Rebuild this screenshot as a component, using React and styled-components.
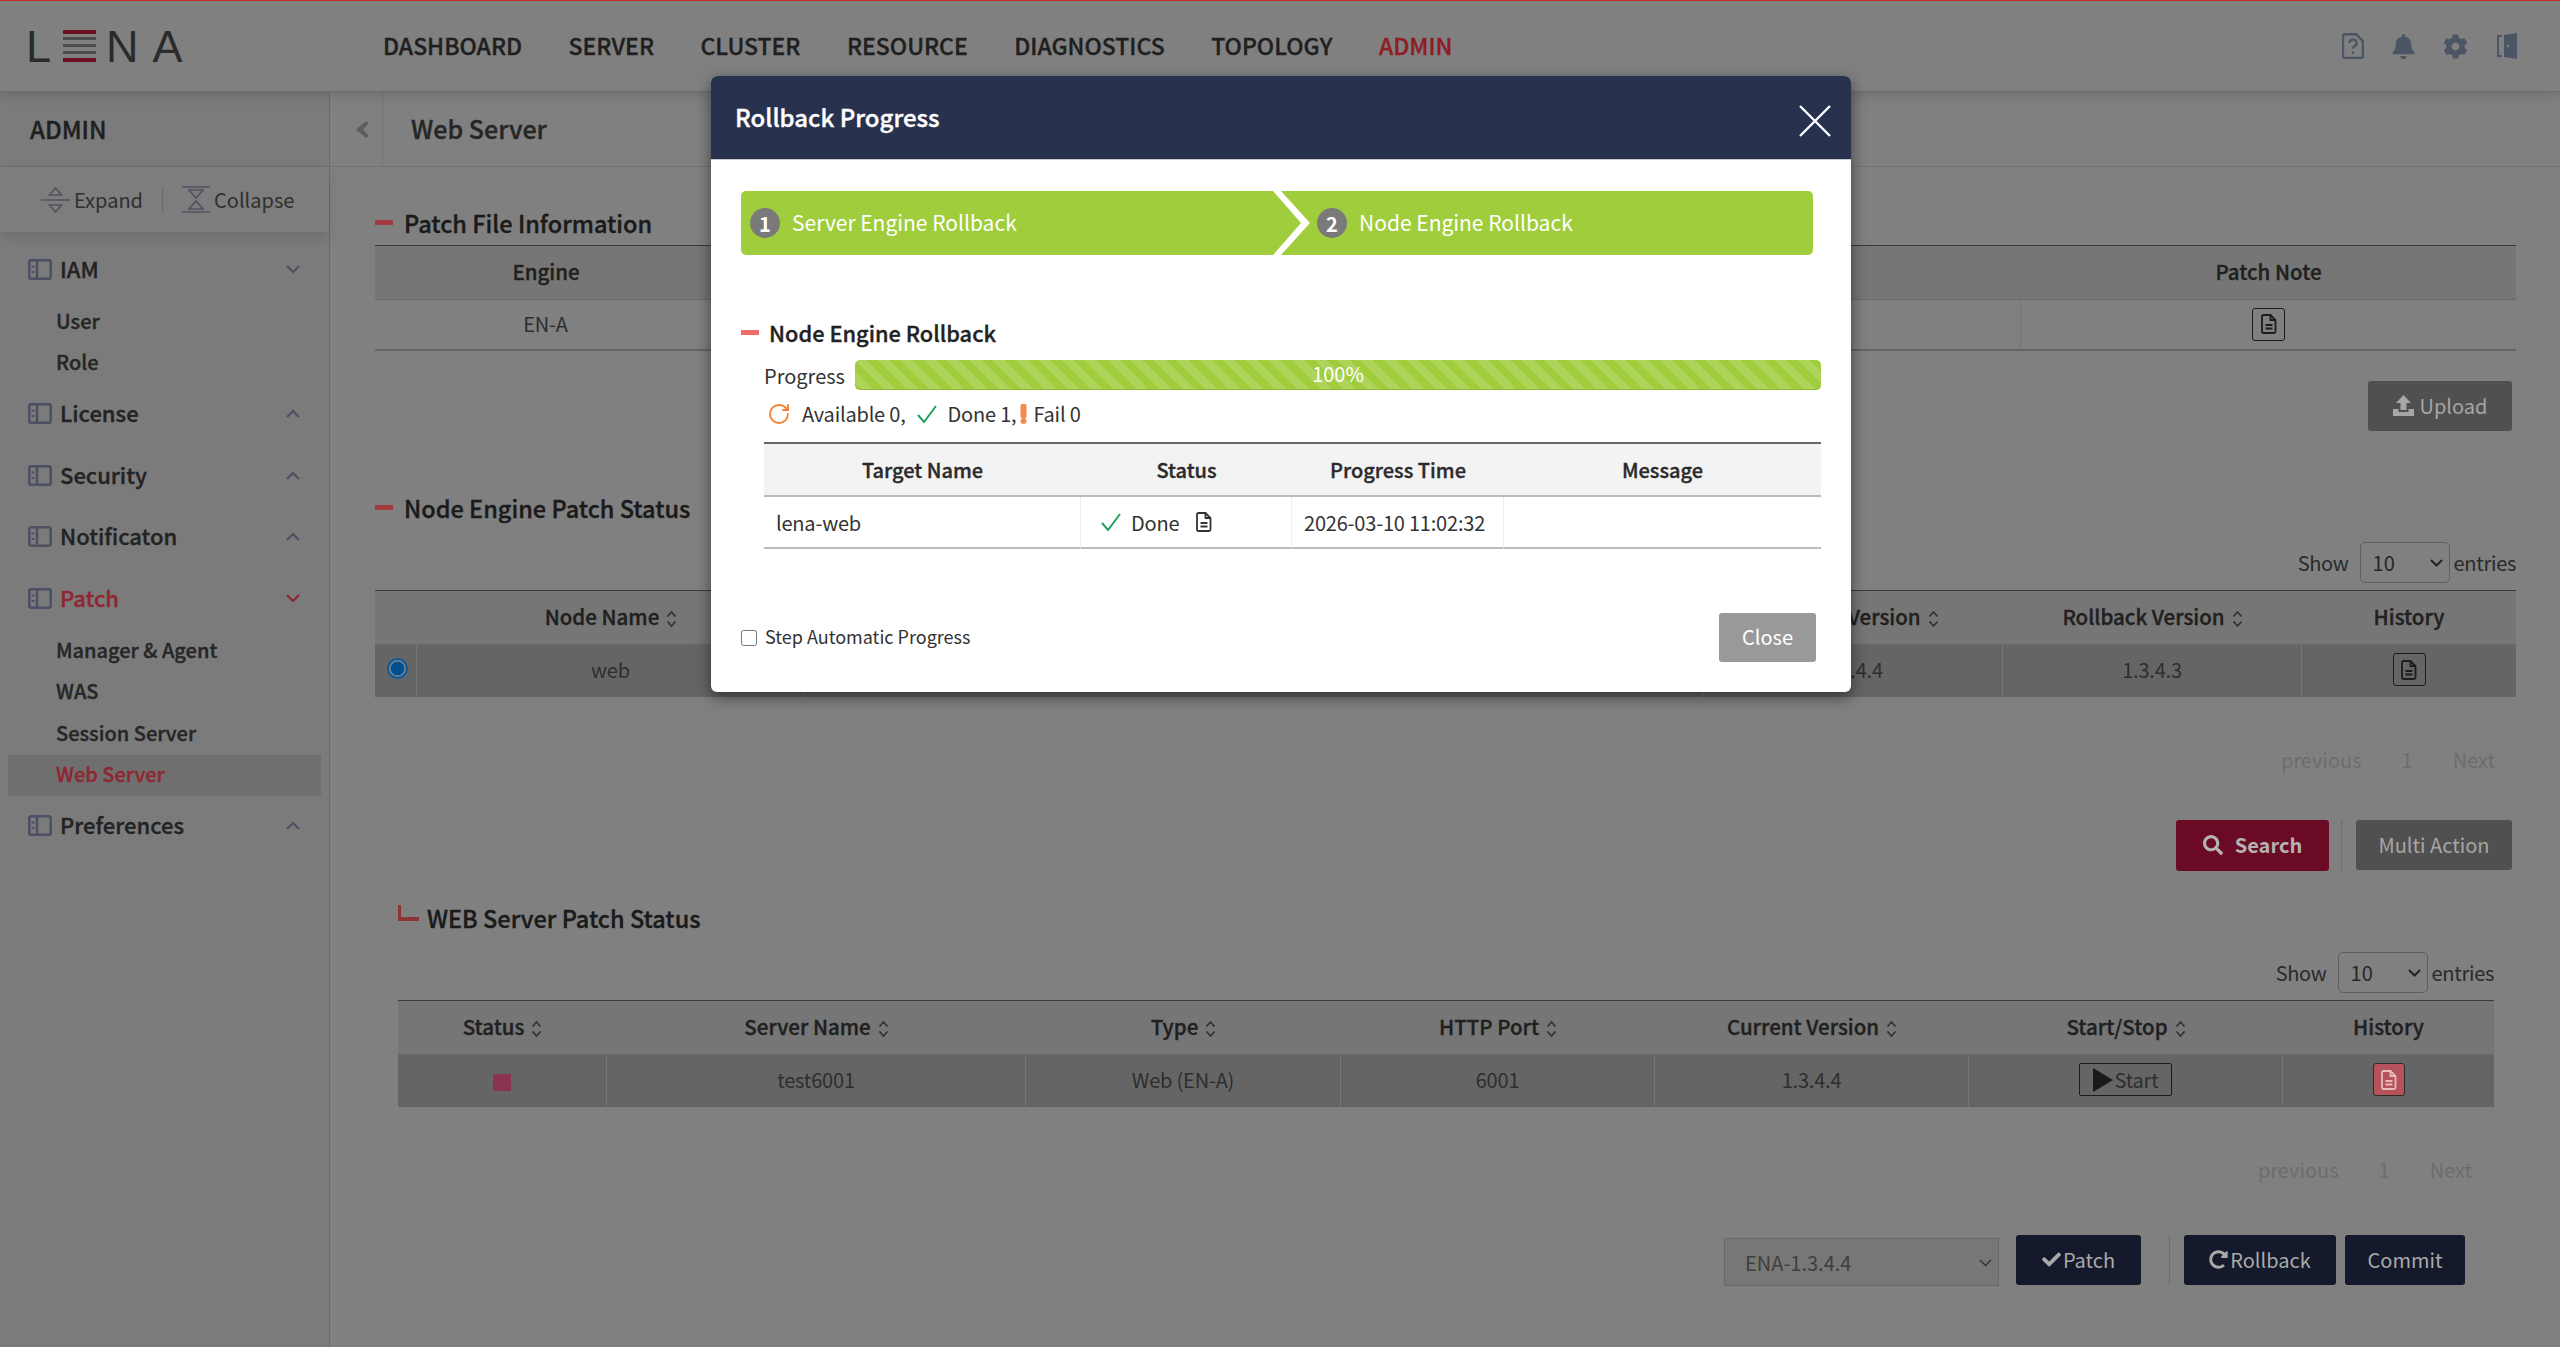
import React from 'react';
import styled, { createGlobalStyle, css } from 'styled-components';
import { FaBell, FaCog, FaSearch, FaCheck, FaRedoAlt } from 'react-icons/fa';
import { RotateCw } from 'lucide-react';

const GlobalStyle = createGlobalStyle`
  * { box-sizing: border-box; }
  html, body { margin: 0; height: 100%; overflow: hidden; }
  body {
    background: #808080;
    font-family: "Noto Sans CJK KR", "Noto Sans", sans-serif;
    color: #262626;
  }
`;

const medium = css`
  font-weight: 500;
  -webkit-text-stroke: 0.35px currentColor;
`;

const menu = [
  { title: 'IAM', open: true, items: ['User', 'Role'] },
  { title: 'License' },
  { title: 'Security' },
  { title: 'Notificaton' },
  { title: 'Patch', open: true, active: true, items: ['Manager & Agent', 'WAS', 'Session Server', 'Web Server'] },
  { title: 'Preferences' },
];

const navItems = ['DASHBOARD', 'SERVER', 'CLUSTER', 'RESOURCE', 'DIAGNOSTICS', 'TOPOLOGY', 'ADMIN'];

const SortIcon = () => (
  <SortSvg viewBox="0 0 11 18" fill="none" stroke="currentColor" strokeWidth="1.8">
    <path d="M1.5 6.5 5.5 2l4 4.5M1.5 11.5l4 4.5 4-4.5" />
  </SortSvg>
);

const FileIcon = ({ size = 20, color = '#1c1c1c' }) => (
  <svg width={size * 0.8} height={size} viewBox="0 0 16 20" fill="none" stroke={color} strokeWidth="1.8">
    <path d="M2.5 1h7l5 5v11.5a1.5 1.5 0 0 1-1.5 1.5H2.5A1.5 1.5 0 0 1 1 17.500v-15A1.500 1.500 0 0 1 2.500 1Z" />
    <path d="M9.500 1v5h5M4.500 11h7M4.500 14.500h7" />
  </svg>
);

const PanelIcon = () => (
  <svg width="24" height="21" viewBox="0 0 24 21" fill="none" stroke="#4c5062" strokeWidth="2.6">
    <rect x="1.300" y="1.300" width="21.400" height="18.400" rx="2" />
    <path d="M9 1v19M5 6.500v2M5 12v2" />
  </svg>
);

const Chevron = ({ up, color = '#4c5062' }) => (
  <svg width="14" height="9" viewBox="0 0 14 9" fill="none" stroke={color} strokeWidth="2.200">
    <path d={up ? 'M1 8l6-6 6 6' : 'M1 1l6 6 6-6'} />
  </svg>
);

const GreenCheck = () => (
  <svg width="20" height="18" viewBox="0 0 20 18" fill="none" stroke="#1fa35a" strokeWidth="2">
    <path d="M1 10l6 7L19 1" />
  </svg>
);

const StatusTable = ({ children, head, widths }) => (
  <DataTable>
    <colgroup>
      {widths.map((w, i) => (
        <col key={i} style={{ width: w }} />
      ))}
    </colgroup>
    <thead>
      <tr>
        {head.map((h, i) => (
          <th key={i}>
            {h.label}
            {h.sort && <SortIcon />}
          </th>
        ))}
      </tr>
    </thead>
    <tbody>{children}</tbody>
  </DataTable>
);

const Entries = () => (
  <ShowRow>
    Show
    <SelectBox>
      <EntrySelect defaultValue="10">
        <option>10</option>
      </EntrySelect>
      <SelectArrow width="13" height="8" viewBox="0 0 13 8">
        <path d="M1 1l5.500 5.500L12 1" />
      </SelectArrow>
    </SelectBox>
    entries
  </ShowRow>
);

const Pagination = ({ right }) => (
  <Pager $right={right}>
    <span>previous</span>
    <span>1</span>
    <span>Next</span>
  </Pager>
);

export default function App() {
  return (
    <Page>
      <GlobalStyle />
      <Topbar>
        <Logo>
          <span>L</span>
          <svg width="33" height="32" viewBox="0 0 33 32">
            <rect y="0" width="33" height="4" fill="#6b0f22" />
            <rect y="7" width="33" height="3" fill="#4d4d4d" />
            <rect y="14" width="33" height="3" fill="#4d4d4d" />
            <rect y="21" width="33" height="3" fill="#4d4d4d" />
            <rect y="28" width="33" height="4" fill="#6b0f22" />
          </svg>
          <LogoN>N</LogoN>
          <LogoA>A</LogoA>
        </Logo>
        <Nav>
          {navItems.map((n) => (
            <NavItem key={n} $active={n === 'ADMIN'}>
              {n}
            </NavItem>
          ))}
        </Nav>
        <TopIcons>
          <svg width="22" height="26" viewBox="0 0 22 26" fill="none" stroke="#4b5563" strokeWidth="2.400">
            <path d="M3 1.200h11l7 7V23a2 2 0 0 1-2 2H3a2 2 0 0 1-2-2V3.200a2 2 0 0 1 2-2Z" />
            <path d="M7.500 10a3.500 3.500 0 1 1 5 3.200c-1.200.6-1.500 1.300-1.500 2.600M11 18.500v2.500" />
          </svg>
          <FaBell size={25} color="#4b5563" />
          <FaCog size={25} color="#4b5563" />
          <DoorIcon width="20" height="26" viewBox="0 0 20 26">
            <path d="M7 2l13-2v26L7 24Z" fill="#4b5563" />
            <path d="M5 3H1v20h4" fill="none" stroke="#4b5563" strokeWidth="2" />
            <circle cx="11" cy="13" r="1.300" fill="#808080" />
          </DoorIcon>
        </TopIcons>
      </Topbar>

      <Body>
        <Sidebar>
          <SideTitle>ADMIN</SideTitle>
          <SideTools>
            <ToolButton>
              <svg width="29" height="26" viewBox="0 0 29 26" fill="none" stroke="#4f5260" strokeWidth="1.600">
                <path d="M0 13h29M14.500 1l6 7h-12ZM14.500 25l6-7h-12Z" />
              </svg>
              Expand
            </ToolButton>
            <ToolDivider />
            <ToolButton>
              <svg width="28" height="27" viewBox="0 0 28 27" fill="none" stroke="#4f5260" strokeWidth="1.600">
                <path d="M0 1h28M0 26h28M7 4h14l-7 8ZM7 23h14l-7-8Z" />
              </svg>
              Collapse
            </ToolButton>
          </SideTools>
          <Menu>
            {menu.map((group) => (
              <Group key={group.title}>
                <GroupHead $active={group.active}>
                  <PanelIcon />
                  <span>{group.title}</span>
                  <GroupChevron>
                    <Chevron up={!group.open} color={group.active ? '#8f2630' : '#4c5062'} />
                  </GroupChevron>
                </GroupHead>
                {group.items && (
                  <SubMenu>
                    {group.items.map((item) => (
                      <SubItem key={item} $active={item === 'Web Server'}>
                        {item}
                      </SubItem>
                    ))}
                  </SubMenu>
                )}
              </Group>
            ))}
          </Menu>
        </Sidebar>

        <Main>
          <Crumb>
            <CrumbToggle>
              <svg width="13" height="17" viewBox="0 0 13 17">
                <path d="M10 0 0 8.500 10 17l3-2-6-6.500L13 2Z" fill="#5e5e5e" />
              </svg>
            </CrumbToggle>
            <CrumbTitle>Web Server</CrumbTitle>
          </Crumb>

          <Content>
            <SectionTitle>Patch File Information</SectionTitle>
            <StatusTable
              widths={['342px', 'auto', '495px']}
              head={[{ label: 'Engine' }, { label: '' }, { label: 'Patch Note' }]}
            >
              <tr>
                <td>EN-A</td>
                <td />
                <td>
                  <IconButton>
                    <FileIcon />
                  </IconButton>
                </td>
              </tr>
            </StatusTable>
            <ActionRow $top={30}>
              <GrayButton $width={144}>
                <svg width="21" height="21" viewBox="0 0 21 21" fill="#a6a6a6">
                  <path d="M10.500 0 18 8h-4.500v7h-6V8H3ZM0 14h5.500v3h10v-3H21v7H0Z" />
                </svg>
                Upload
              </GrayButton>
            </ActionRow>

            <SectionTitle $top={59}>Node Engine Patch Status</SectionTitle>
            <Entries />
            <StatusTable
              widths={['42px', '388px', 'auto', '299px', '299px', '214px']}
              head={[
                { label: '' },
                { label: 'Node Name', sort: true },
                { label: '' },
                { label: 'Current Version', sort: true },
                { label: 'Rollback Version', sort: true },
                { label: 'History' },
              ]}
            >
              <SelectedRow>
                <td>
                  <Radio />
                </td>
                <td>web</td>
                <td />
                <td>1.3.4.4</td>
                <td>1.3.4.3</td>
                <td>
                  <IconButton>
                    <FileIcon />
                  </IconButton>
                </td>
              </SelectedRow>
            </StatusTable>
            <Pagination right={21} />
            <ActionRow $top={43}>
              <SearchButton>
                <FaSearch size={20} />
                Search
              </SearchButton>
              <ActionDivider />
              <GrayButton $width={156}>Multi Action</GrayButton>
            </ActionRow>

            <SubSection>
              <SubTitle>WEB Server Patch Status</SubTitle>
              <Entries />
              <StatusTable
                widths={['209px', '419px', '315px', '314px', '314px', '314px', '211px']}
                head={[
                  { label: 'Status', sort: true },
                  { label: 'Server Name', sort: true },
                  { label: 'Type', sort: true },
                  { label: 'HTTP Port', sort: true },
                  { label: 'Current Version', sort: true },
                  { label: 'Start/Stop', sort: true },
                  { label: 'History' },
                ]}
              >
                <SelectedRow>
                  <td>
                    <StopMark />
                  </td>
                  <td>test6001</td>
                  <td>Web (EN-A)</td>
                  <td>6001</td>
                  <td>1.3.4.4</td>
                  <td>
                    <StartButton>
                      <svg width="20" height="24" viewBox="0 0 20 24">
                        <path d="M0 0l20 12L0 24Z" fill="#1a1a1a" />
                      </svg>
                      Start
                    </StartButton>
                  </td>
                  <td>
                    <HistoryAlert>
                      <FileIcon color="#e6bcbc" />
                    </HistoryAlert>
                  </td>
                </SelectedRow>
              </StatusTable>
              <Pagination right={22} />
              <BottomActions>
                <VersionBox>
                  <VersionSelect defaultValue="ENA-1.3.4.4">
                    <option>ENA-1.3.4.4</option>
                  </VersionSelect>
                  <VersionArrow width="13" height="8" viewBox="0 0 13 8">
                    <path d="M1 1l5.500 5.500L12 1" />
                  </VersionArrow>
                </VersionBox>
                <NavyButton $width={125}>
                  <FaCheck size={19} />
                  Patch
                </NavyButton>
                <BottomDivider />
                <NavyButton $width={152}>
                  <FaRedoAlt size={19} />
                  Rollback
                </NavyButton>
                <NavyButton $width={120}>Commit</NavyButton>
              </BottomActions>
            </SubSection>
          </Content>
        </Main>
      </Body>

      <Modal>
        <ModalHeader>
          <ModalTitle>Rollback Progress</ModalTitle>
          <CloseIcon width="32" height="32" viewBox="0 0 32 32" stroke="#fff" strokeWidth="2.400">
            <path d="M1 1l30 30M31 1 1 31" />
          </CloseIcon>
        </ModalHeader>
        <ModalBody>
          <Steps>
            <Step>
              <StepNumber>1</StepNumber>
              <StepLabel>Server Engine Rollback</StepLabel>
            </Step>
            <StepArrow width="37" height="64" viewBox="0 0 37 64">
              <path d="M0 0h8l29 32L8 64H0l28-32Z" fill="#fff" />
            </StepArrow>
            <Step>
              <StepNumber>2</StepNumber>
              <StepLabel>Node Engine Rollback</StepLabel>
            </Step>
          </Steps>

          <ModalSection>Node Engine Rollback</ModalSection>
          <Indented>
            <ProgressRow>
              <span>Progress</span>
              <ProgressBar>100%</ProgressBar>
            </ProgressRow>
            <Counts>
              <RotateCw size={24} color="#f47f2e" strokeWidth={1.800} />
              <span>Available 0,</span>
              <GreenCheck />
              <span>Done 1,</span>
              <BangIcon width="7" height="20" viewBox="0 0 7 20" fill="#f58a4b">
                <rect x="0.500" width="6" height="14" rx="1.500" />
                <circle cx="3.500" cy="17" r="3" />
              </BangIcon>
              <span>Fail 0</span>
            </Counts>
            <ProgressTable>
              <colgroup>
                <col style={{ width: 317 }} />
                <col style={{ width: 211 }} />
                <col style={{ width: 212 }} />
                <col />
              </colgroup>
              <thead>
                <tr>
                  <th>Target Name</th>
                  <th>Status</th>
                  <th>Progress Time</th>
                  <th>Message</th>
                </tr>
              </thead>
              <tbody>
                <tr>
                  <td>lena-web</td>
                  <td>
                    <DoneCell>
                      <GreenCheck />
                      Done
                      <FileIcon size={20} color="#333" />
                    </DoneCell>
                  </td>
                  <td>2026-03-10 11:02:32</td>
                  <td />
                </tr>
              </tbody>
            </ProgressTable>
          </Indented>
          <ModalFooter>
            <AutoLabel>
              <input type="checkbox" />
              Step Automatic Progress
            </AutoLabel>
            <CloseButton>Close</CloseButton>
          </ModalFooter>
        </ModalBody>
      </Modal>
    </Page>
  );
}

const Page = styled.div`
  position: relative;
  width: 2560px;
  height: 1347px;
  overflow: hidden;
  border-top: 1px solid #c62828;
`;

const Topbar = styled.header`
  position: relative;
  z-index: 2;
  display: flex;
  align-items: center;
  height: 91px;
  padding: 0 43px 0 30px;
  background: #808080;
  border-bottom: 1px solid #6e6e6e;
  box-shadow: 0 3px 12px rgba(0, 0, 0, 0.14);
`;

const Logo = styled.div`
  display: flex;
  align-items: center;
  gap: 12px;
  width: 353px;
  margin-left: -4px;
  margin-right: 4px;
  font-family: "Liberation Sans", sans-serif;
  font-size: 45px;
  line-height: 1;
  color: #2b2b2b;
`;

const LogoN = styled.span`
  margin-left: -2px;
`;

const LogoA = styled.span`
  margin-left: 2px;
`;

const Nav = styled.nav`
  display: flex;
  gap: 46.500px;
  padding-bottom: 3px;
`;

const NavItem = styled.a`
  font-size: 23px;
  ${medium}
  color: ${(p) => (p.$active ? '#8f1d24' : '#1f1f1f')};
`;

const TopIcons = styled.div`
  display: flex;
  align-items: center;
  gap: 27px;
  margin-left: auto;
`;

const DoorIcon = styled.svg`
  margin-left: 2px;
`;

const Body = styled.div`
  display: flex;
  height: 1255px;
`;

const Sidebar = styled.aside`
  flex: 0 0 330px;
  background: #7b7b7b;
  border-right: 1px solid #6c6c6c;
`;

const SideTitle = styled.h2`
  display: flex;
  align-items: center;
  height: 75px;
  margin: 0;
  padding: 0 0 2px 30px;
  font-size: 24px;
  ${medium}
  color: #1f1f1f;
  border-bottom: 1px solid #6c6c6c;
`;

const SideTools = styled.div`
  position: relative;
  display: flex;
  align-items: center;
  gap: 19px;
  height: 65px;
  padding-left: 41px;
  background: #7d7d7d;
  box-shadow: 0 6px 12px rgba(0, 0, 0, 0.1);
`;

const ToolButton = styled.div`
  display: flex;
  align-items: center;
  gap: 4px;
  font-size: 20px;
  color: #2f2f2f;
`;

const ToolDivider = styled.i`
  width: 1px;
  height: 26px;
  background: #6a6a6a;
`;

const Menu = styled.nav`
  padding: 17px 0 0;
`;

const Group = styled.div`
  margin-bottom: 21.500px;
`;

const GroupHead = styled.div`
  display: flex;
  align-items: center;
  gap: 8px;
  height: 40px;
  padding: 0 29px 0 28px;
  font-size: 22px;
  ${medium}
  color: ${(p) => (p.$active ? '#8f2630' : '#232323')};

  span:nth-child(2) {
    margin-bottom: 3px;
  }
`;

const GroupChevron = styled.span`
  display: flex;
  margin-left: auto;
`;

const SubMenu = styled.div`
  margin: 12px 0 -12px;
`;

const SubItem = styled.div`
  display: flex;
  align-items: center;
  height: 41.500px;
  margin: 0 8px;
  padding: 0 0 3px 48px;
  font-size: 20px;
  ${medium}
  color: ${(p) => (p.$active ? '#8f2630' : '#262626')};
  background: ${(p) => (p.$active ? '#6f6f6f' : 'transparent')};
`;

const Main = styled.main`
  flex: 1;
  min-width: 0;
`;

const Crumb = styled.div`
  display: flex;
  height: 75px;
  border-bottom: 1px solid #727272;
`;

const CrumbToggle = styled.div`
  display: flex;
  align-items: center;
  justify-content: center;
  width: 53px;
  padding-left: 12px;
  border-right: 1px solid #747474;
`;

const CrumbTitle = styled.h1`
  display: flex;
  align-items: center;
  margin: 0;
  padding: 0 0 3px 28px;
  font-size: 25px;
  ${medium}
  color: #262626;
`;

const Content = styled.div`
  padding: 38px 44px 0 45px;
`;

const SectionTitle = styled.h3`
  display: flex;
  align-items: center;
  gap: 11px;
  height: 40px;
  margin: ${(p) => p.$top || 0}px 0 0;
  padding-bottom: 5px;
  font-size: 23.500px;
  ${medium}
  color: #1a1a1a;

  &::before {
    content: '';
    width: 18px;
    height: 5px;
    background: #a03a3f;
  }
`;

const SubSection = styled.section`
  margin-top: 30px;
  padding: 0 22px 0 23px;
`;

const SubTitle = styled.h3`
  display: flex;
  align-items: center;
  gap: 8px;
  height: 40px;
  margin: 0;
  padding-bottom: 5px;
  font-size: 23.500px;
  ${medium}
  color: #1a1a1a;

  &::before {
    content: '';
    width: 18px;
    height: 12px;
    margin-top: -9px;
    border-left: 3px solid #8f3338;
    border-bottom: 4px solid #8f3338;
  }
`;

const SortSvg = styled.svg`
  width: 11px;
  height: 18px;
  margin-left: 7px;
  vertical-align: -3px;
  color: #333;
`;

const DataTable = styled.table`
  width: 100%;
  table-layout: fixed;
  border-collapse: separate;
  border-spacing: 0;
  font-size: 20px;

  th {
    height: 55px;
    padding: 0 0 3px;
    font-size: 20.500px;
    ${medium}
    color: #202020;
    background: #767676;
    border-top: 1px solid #3a3a3a;
    border-bottom: 1px solid #6a6a6a;
  }

  td {
    height: 51px;
    padding: 0 0 2px;
    text-align: center;
    letter-spacing: -0.2px;
    color: #2e2e2e;
    border-bottom: 2px solid #646464;
    border-right: 1px solid #757575;
  }

  td:last-child {
    border-right: 0;
  }
`;

const SelectedRow = styled.tr`
  td {
    height: 52px;
    background: #656565;
    border-right-color: #787878;
  }
`;

const IconButton = styled.span`
  display: inline-flex;
  align-items: center;
  justify-content: center;
  width: 33px;
  height: 33px;
  vertical-align: middle;
  border: 1px solid #1c1c1c;
  border-radius: 3px;
`;

const HistoryAlert = styled(IconButton)`
  width: 32px;
  background: #b5525a;
  border-color: #2c2c2c;
`;

const Radio = styled.span`
  display: inline-block;
  width: 21px;
  height: 21px;
  margin: 0 0 6px 3px;
  vertical-align: middle;
  border: 2px solid #0b5a99;
  border-radius: 50%;
  background: radial-gradient(circle, #00508f 0 6.500px, #6b7f92 7px);
`;

const StopMark = styled.span`
  display: inline-block;
  width: 18px;
  height: 17px;
  vertical-align: middle;
  background: #8b3450;
`;

const StartButton = styled.span`
  display: inline-flex;
  align-items: center;
  justify-content: center;
  gap: 2px;
  width: 93px;
  height: 33px;
  vertical-align: middle;
  border: 1px solid #1c1c1c;
  border-radius: 2px;
  color: #2e2e2e;
`;

const ActionRow = styled.div`
  display: flex;
  justify-content: flex-end;
  height: 50px;
  margin-top: ${(p) => p.$top}px;
  padding-right: 4px;
`;

const ButtonBase = styled.button`
  display: inline-flex;
  align-items: center;
  justify-content: center;
  height: 50px;
  padding: 0 0 2px;
  border: 0;
  border-radius: 3px;
  font-family: inherit;
  font-size: 20px;
`;

const GrayButton = styled(ButtonBase)`
  gap: 6px;
  width: ${(p) => p.$width}px;
  background: #505050;
  color: #a6a6a6;
`;

const SearchButton = styled(ButtonBase)`
  gap: 12px;
  width: 153px;
  height: 51px;
  background: #6b0a25;
  color: #b3b3b3;
  font-weight: 700;
`;

const ActionDivider = styled.i`
  width: 1px;
  margin: 0 14px 0 12px;
  background: #6e6e6e;
`;

const ShowRow = styled.div`
  display: flex;
  align-items: center;
  justify-content: flex-end;
  height: 41px;
  margin: 12px 0 7px;
  font-size: 20px;
  letter-spacing: -0.3px;
  color: #2a2a2a;
`;

const SelectBox = styled.span`
  position: relative;
  display: flex;
  margin: 0 4px 0 11px;
`;

const EntrySelect = styled.select`
  width: 90px;
  height: 41px;
  padding-left: 12px;
  appearance: none;
  font-family: inherit;
  font-size: 20px;
  color: #262626;
  background: transparent;
  border: 1px solid #5f5f5f;
  border-radius: 5px;
`;

const SelectArrow = styled.svg`
  position: absolute;
  top: 17px;
  left: 70px;
  fill: none;
  stroke: #222;
  stroke-width: 2;
  pointer-events: none;
`;

const Pager = styled.div`
  display: flex;
  align-items: center;
  justify-content: flex-end;
  gap: 40px;
  height: 30px;
  margin-top: 50px;
  padding: 0 ${(p) => p.$right}px 5px 0;
  font-size: 20px;
  color: #6d6d6d;
`;

const BottomActions = styled.div`
  display: flex;
  align-items: flex-start;
  justify-content: flex-end;
  margin-top: 48px;
  padding-right: 29px;
`;

const VersionBox = styled.span`
  position: relative;
  display: flex;
  margin: 3px 17px 0 0;
`;

const VersionSelect = styled.select`
  width: 275px;
  height: 48px;
  padding-left: 20px;
  appearance: none;
  font-family: inherit;
  font-size: 20px;
  color: #3f3f3f;
  background: #777;
  border: 1px solid #696969;
`;

const VersionArrow = styled.svg`
  position: absolute;
  top: 21px;
  left: 255px;
  fill: none;
  stroke: #333;
  stroke-width: 1.500;
  pointer-events: none;
`;

const NavyButton = styled(ButtonBase)`
  gap: 2px;
  width: ${(p) => p.$width}px;
  margin-left: 9px;
  background: #141a2b;
  color: #a9a9a9;

  &:first-of-type {
    margin-left: 0;
  }
`;

const BottomDivider = styled.i`
  width: 1px;
  height: 50px;
  margin: 0 5px 0 28px;
  background: #6e6e6e;
`;

const Modal = styled.div`
  position: absolute;
  z-index: 5;
  top: 75px;
  left: 711px;
  width: 1140px;
  height: 616px;
  background: #fff;
  border-radius: 6px;
  box-shadow: 0 5px 15px rgba(0, 0, 0, 0.5);
`;

const ModalHeader = styled.div`
  display: flex;
  align-items: center;
  justify-content: space-between;
  height: 84px;
  padding: 0 20px 0 24px;
  background: #28324e;
  border-bottom: 1px solid #ccc;
  border-radius: 6px 6px 0 0;
`;

const ModalTitle = styled.h4`
  margin: 0 0 3px;
  font-size: 24px;
  ${medium}
  color: #fff;
`;

const CloseIcon = styled.svg`
  margin-top: 6px;
`;

const ModalBody = styled.div`
  padding: 31px 30px 0;
`;

const Steps = styled.div`
  position: relative;
  display: flex;
  height: 64px;
  margin-right: 8px;
  padding-left: 9px;
  background: #a0cd3c;
  border-radius: 5px;
`;

const Step = styled.div`
  display: flex;
  flex: 1;
  align-items: center;
  gap: 12px;
  font-size: 21px;
  color: #fff;

  &:first-child {
    flex: 0 0 567px;
  }
`;

const StepLabel = styled.span`
  margin-bottom: 3px;
`;

const StepNumber = styled.span`
  display: flex;
  align-items: center;
  justify-content: center;
  width: 30px;
  height: 30px;
  font-size: 20px;
  font-weight: 700;
  color: #fff;
  background: #7a7a7a;
  border-radius: 50%;
`;

const StepArrow = styled.svg`
  position: absolute;
  top: 0;
  left: 532px;
`;

const ModalSection = styled.h4`
  display: flex;
  align-items: center;
  gap: 10px;
  height: 40px;
  margin: 58px 0 0;
  padding-bottom: 2px;
  font-size: 21.800px;
  ${medium}
  color: #222;

  &::before {
    content: '';
    width: 18px;
    height: 5px;
    background: #f26c6c;
  }
`;

const Indented = styled.div`
  padding-left: 23px;
`;

const ProgressRow = styled.div`
  display: flex;
  align-items: center;
  justify-content: space-between;
  margin-top: 7px;
  font-size: 20px;
  color: #333;
`;

const ProgressBar = styled.div`
  width: 966px;
  height: 30px;
  font-size: 20px;
  line-height: 28px;
  text-align: center;
  color: #fff;
  border-bottom: 1px solid #90b836;
  border-radius: 5px;
  background-color: #a0cd3c;
  background-image: linear-gradient(
    45deg,
    rgba(255, 255, 255, 0.15) 25%,
    transparent 25%,
    transparent 50%,
    rgba(255, 255, 255, 0.15) 50%,
    rgba(255, 255, 255, 0.15) 75%,
    transparent 75%
  );
  background-size: 23px 23px;
`;

const Counts = styled.div`
  display: flex;
  align-items: center;
  gap: 11px;
  height: 30px;
  margin-top: 10px;
  padding: 0 0 3px 3px;
  font-size: 20px;
  letter-spacing: -0.2px;
  color: #333;
`;

const BangIcon = styled.svg`
  margin: 0 -5px 0 -7px;
`;

const ProgressTable = styled.table`
  width: 100%;
  margin-top: 12px;
  table-layout: fixed;
  border-collapse: separate;
  border-spacing: 0;
  font-size: 20px;

  th {
    height: 55px;
    padding: 0;
    ${medium}
    color: #2a2a2a;
    background: #f3f3f3;
    border-top: 2px solid #666;
    border-bottom: 2px solid #bbb;
  }

  td {
    height: 52px;
    padding: 0 12px;
    white-space: nowrap;
    letter-spacing: -0.2px;
    color: #333;
    border-right: 1px solid #eee;
    border-bottom: 2px solid #bbb;
  }

  td:last-child {
    border-right: 0;
  }
`;

const DoneCell = styled.div`
  display: flex;
  align-items: center;
  gap: 10px;
  padding-left: 8px;

  svg:last-child {
    margin-left: 7px;
  }
`;

const ModalFooter = styled.div`
  display: flex;
  align-items: center;
  justify-content: space-between;
  margin-top: 64px;
  padding-right: 5px;
`;

const AutoLabel = styled.label`
  display: flex;
  align-items: center;
  gap: 8px;
  padding-bottom: 3px;
  font-size: 18px;
  color: #333;

  input {
    width: 16px;
    height: 16px;
    margin: 3px 0 0;
  }
`;

const CloseButton = styled(ButtonBase)`
  width: 97px;
  height: 49px;
  background: #999;
  color: #fff;
`;
